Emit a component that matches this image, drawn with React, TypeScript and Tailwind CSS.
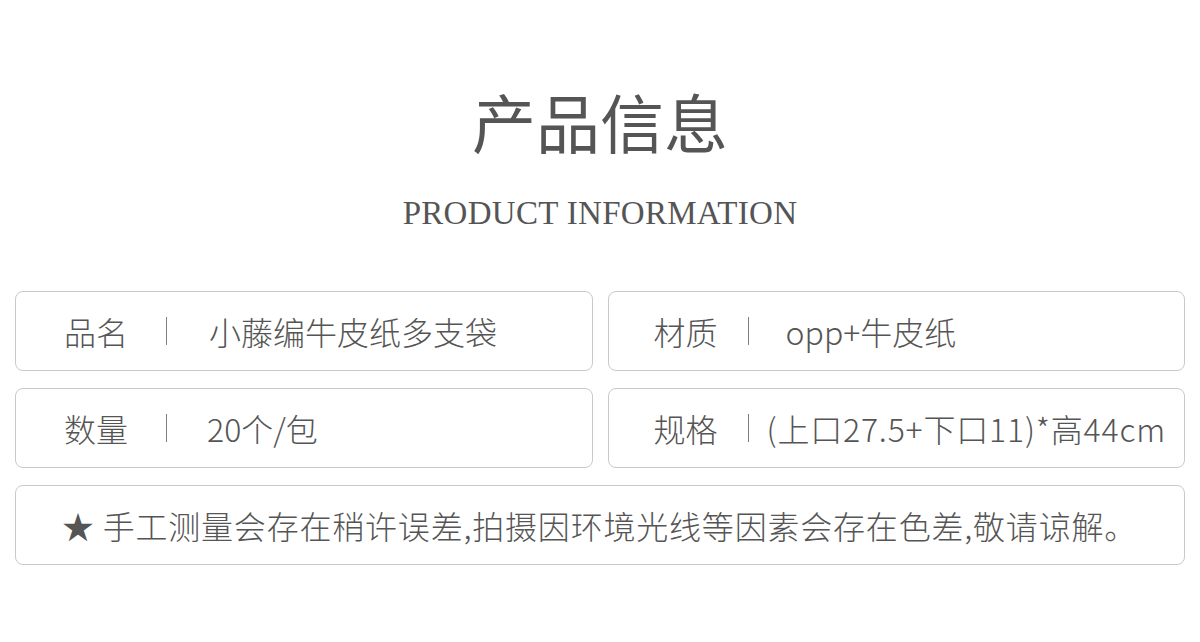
import React from 'react';

interface Spec {
  label: string;
  value: string;
  valueClass: string;
}

const cjk = { fontFamily: '"Noto Sans CJK SC", "Noto Sans", sans-serif' };

const leftSpecs: Spec[] = [
  { label: '品名', value: '小藤编牛皮纸多支袋', valueClass: 'ml-[42px]' },
  { label: '数量', value: '20个/包', valueClass: 'ml-[40px]' },
];

const rightSpecs: Spec[] = [
  { label: '材质', value: 'opp+牛皮纸', valueClass: 'ml-[37px]' },
  { label: '规格', value: '(上口27.5+下口11)*高44cm', valueClass: 'ml-[18px] tracking-[0.8px]' },
];

const SpecBox: React.FC<{ spec: Spec; padClass: string; gapClass: string }> = ({ spec, padClass, gapClass }) => (
  <div className={`h-[80px] flex items-center border border-[#c9c9c9] rounded-[8px] bg-white ${padClass}`}>
    <span className="text-[32px] leading-none font-light text-[#555]">{spec.label}</span>
    <span className={`w-px h-[28px] bg-[#7f7f7f] ${gapClass}`} />
    <span className={`text-[32px] leading-none font-light text-[#555] whitespace-nowrap ${spec.valueClass}`}>
      {spec.value}
    </span>
  </div>
);

const App: React.FC = () => {
  return (
    <div className="w-[1200px] h-[642px] bg-white flex flex-col items-center" style={cjk}>
      <h1 className="mt-[88px] text-[64px] leading-[64px] font-normal text-[#555]">产品信息</h1>
      <p
        className="mt-[46px] text-[33px] leading-[30px] tracking-[0.3px] text-[#555]"
        style={{ fontFamily: '"Liberation Serif", serif' }}
      >
        PRODUCT INFORMATION
      </p>

      <div className="mt-[63px] w-full px-[15px] grid grid-cols-2 gap-x-[15px] gap-y-[17px]">
        <SpecBox spec={leftSpecs[0]} padClass="pl-[48px]" gapClass="ml-[38px]" />
        <SpecBox spec={rightSpecs[0]} padClass="pl-[45px]" gapClass="ml-[30px]" />
        <SpecBox spec={leftSpecs[1]} padClass="pl-[48px]" gapClass="ml-[38px]" />
        <SpecBox spec={rightSpecs[1]} padClass="pl-[45px]" gapClass="ml-[30px]" />
        <div className="col-span-2 h-[80px] flex items-center pl-[46px] border border-[#c9c9c9] rounded-[8px] bg-white">
          <span className="text-[32px] leading-none font-light tracking-[0.8px] text-[#555] whitespace-nowrap">
            ★ 手工测量会存在稍许误差,拍摄因环境光线等因素会存在色差,敬请谅解。
          </span>
        </div>
      </div>
    </div>
  );
};

export default App;
